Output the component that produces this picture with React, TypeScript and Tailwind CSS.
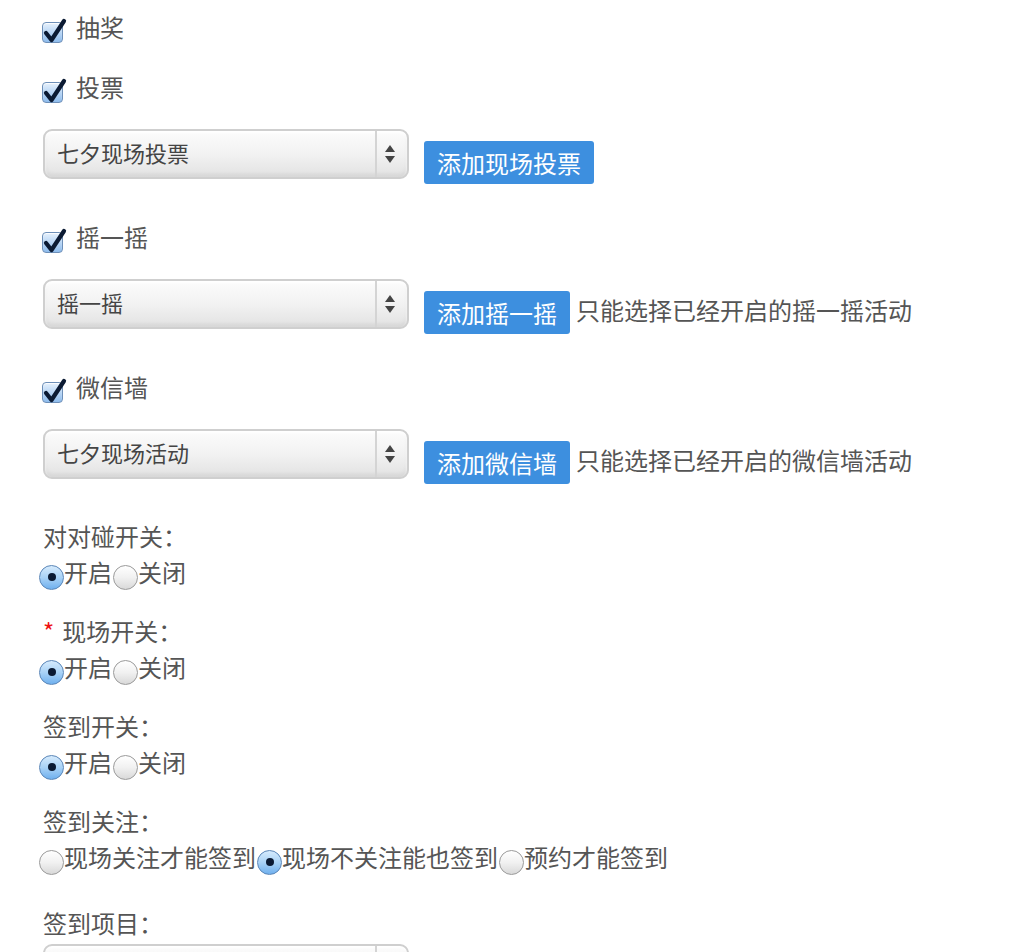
import React from "react";

const font = { fontFamily: '"Noto Sans CJK SC", "Noto Sans", sans-serif' };

function Check() {
  return (
    <span className="relative inline-block w-[24px] h-[24px] shrink-0">
      <span className="absolute left-[1px] top-[4px] w-[21px] h-[21px] rounded-[4px] border border-[#6d8fb8] bg-gradient-to-b from-[#e6f1fc] via-[#b9d6f5] to-[#8fbcec] shadow-[inset_0_1px_1px_rgba(255,255,255,0.9)]" />
      <svg className="absolute left-0 top-0" width="28" height="28" viewBox="0 0 28 28">
        <path d="M5 15 L10.5 22 L23 3" fill="none" stroke="#0b1a33" strokeWidth="4.2" strokeLinecap="round" strokeLinejoin="round" />
      </svg>
    </span>
  );
}

function CheckRow({ label }: { label: string }) {
  return (
    <div className="flex items-center h-[40px] pl-[41px]">
      <span className="mt-[8px]">
        <Check />
      </span>
      <span className="ml-[11px] text-[24px] text-[#555] leading-none -mt-[3px]">{label}</span>
    </div>
  );
}

function Select({ value }: { value: string }) {
  return (
    <div className="relative w-[366px] h-[50px] rounded-[9px] border-2 border-[#cfcfcf] bg-gradient-to-b from-[#fcfcfc] via-[#f2f2f2] to-[#e2e2e2] shadow-[inset_0_2px_3px_rgba(255,255,255,1),inset_0_-3px_4px_rgba(0,0,0,0.06)] flex items-center shrink-0">
      <span className="pl-[12px] text-[22px] text-[#444] leading-none flex-1 -mt-[4px]">{value}</span>
      <span className="w-[2px] self-stretch bg-[#d4d4d4] mr-[6px]" />
      <svg width="14" height="22" viewBox="0 0 14 22" className="mr-[10px]">
        <path d="M7 2 L12 9 L2 9 Z" fill="#444" />
        <path d="M7 20 L12 13 L2 13 Z" fill="#444" />
      </svg>
    </div>
  );
}

function SelectRow({ value, btn, hint }: { value: string; btn: string; hint?: string }) {
  return (
    <div className="flex items-start pl-[43px] h-[55px]">
      <Select value={value} />
      <div className="flex items-center mt-[12px] ml-[15px]">
        <span className="h-[43px] px-[13px] flex items-center bg-[#3d8fdf] rounded-[3px] text-white text-[24px] leading-none">{btn}</span>
        {hint && <span className="ml-[6px] text-[24px] text-[#555] leading-none -mt-[6px]">{hint}</span>}
      </div>
    </div>
  );
}

function Radio({ on }: { on?: boolean }) {
  return (
    <span
      className={
        "relative inline-flex items-center justify-center w-[25px] h-[25px] rounded-full border shrink-0 mt-[8px] " +
        (on
          ? "border-[#5a86b8] bg-gradient-to-b from-[#d6ebfd] via-[#a9d2f6] to-[#6fb0ee]"
          : "border-[#9a9a9a] bg-gradient-to-b from-[#ffffff] via-[#f1f1f1] to-[#d9d9d9]")
      }
    >
      {on && <span className="w-[8px] h-[8px] rounded-full bg-[#0b1a33]" />}
    </span>
  );
}

function RadioRow({ items }: { items: { label: string; on?: boolean }[] }) {
  return (
    <div className="flex items-center h-[38px] pl-[39px]">
      {items.map((it, i) => (
        <span key={i} className={"flex items-center " + (i > 0 ? "ml-[1px]" : "")}>
          <Radio on={it.on} />
          <span className="text-[24px] text-[#555] leading-none -mt-[3px]">{it.label}</span>
        </span>
      ))}
    </div>
  );
}

function Label({ children }: { children: React.ReactNode }) {
  return <div className="h-[36px] flex items-center pl-[43px] text-[24px] text-[#555] leading-none">{children}</div>;
}

export default function App() {
  return (
    <div className="w-[1016px] h-[952px] overflow-hidden bg-white pt-[8px]" style={font}>
      <CheckRow label="抽奖" />
      <div className="mt-[20px]">
        <CheckRow label="投票" />
      </div>
      <div className="mt-[21px]">
        <SelectRow value="七夕现场投票" btn="添加现场投票" />
      </div>
      <div className="mt-[34px]">
        <CheckRow label="摇一摇" />
      </div>
      <div className="mt-[21px]">
        <SelectRow value="摇一摇" btn="添加摇一摇" hint="只能选择已经开启的摇一摇活动" />
      </div>
      <div className="mt-[34px]">
        <CheckRow label="微信墙" />
      </div>
      <div className="mt-[21px]">
        <SelectRow value="七夕现场活动" btn="添加微信墙" hint="只能选择已经开启的微信墙活动" />
      </div>
      <div className="mt-[34px]">
        <Label>对对碰开关：</Label>
        <RadioRow items={[{ label: "开启", on: true }, { label: "关闭" }]} />
      </div>
      <div className="mt-[21px]">
        <Label>
          <span className="text-[#ee1111] mr-[8px]">*</span>现场开关：
        </Label>
        <RadioRow items={[{ label: "开启", on: true }, { label: "关闭" }]} />
      </div>
      <div className="mt-[21px]">
        <Label>签到开关：</Label>
        <RadioRow items={[{ label: "开启", on: true }, { label: "关闭" }]} />
      </div>
      <div className="mt-[21px]">
        <Label>签到关注：</Label>
        <RadioRow
          items={[
            { label: "现场关注才能签到" },
            { label: "现场不关注能也签到", on: true },
            { label: "预约才能签到" },
          ]}
        />
      </div>
      <div className="mt-[28px]">
        <Label>签到项目：</Label>
        <div className="pl-[43px] mt-[3px]">
          <Select value="" />
        </div>
      </div>
    </div>
  );
}
